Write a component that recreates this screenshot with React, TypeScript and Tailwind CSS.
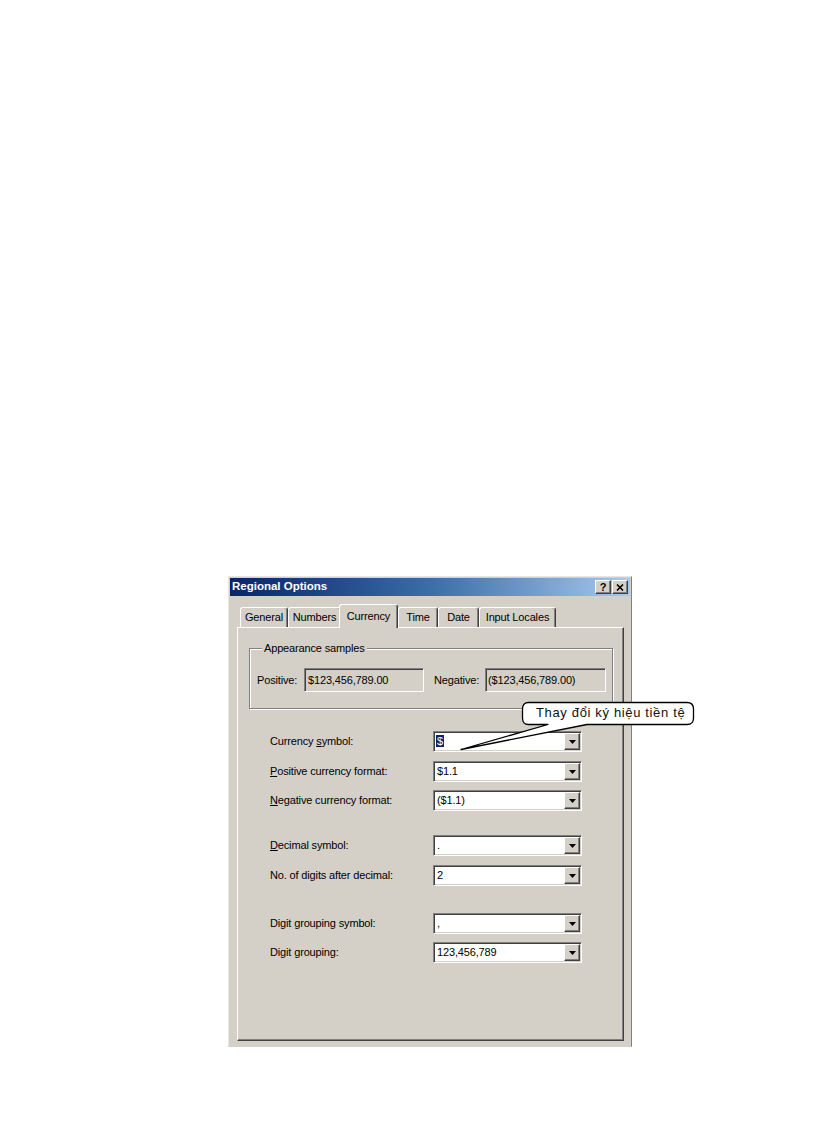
import type { ReactNode } from "react";

// classic 3D edges
const raised =
  "border border-t-white border-l-white border-r-[#404040] border-b-[#404040] shadow-[inset_-1px_-1px_0_#808080]";
const sunken =
  "border border-t-[#808080] border-l-[#808080] border-r-white border-b-white shadow-[inset_1px_1px_0_#404040,inset_-1px_-1px_0_#d4d0c8]";

const tabs = [
  { label: "General", w: "w-[48px]" },
  { label: "Numbers", w: "w-[53px]" },
  { label: "Currency", w: "w-[59px]", active: true },
  { label: "Time", w: "w-[40px]" },
  { label: "Date", w: "w-[41px]" },
  { label: "Input Locales", w: "w-[77px]" },
];

function Tab({ label, w, active }: { label: string; w: string; active?: boolean }) {
  if (active) {
    return (
      <div
        className={`${w} relative z-10 -mb-px -ml-[2px] flex h-[24px] items-start justify-center rounded-t-[3px] border-t border-l border-r border-t-white border-l-white border-r-[#404040] bg-[#d4d0c8] pt-[3px] shadow-[inset_-1px_0_0_#808080]`}
      >
        {label}
      </div>
    );
  }
  return (
    <div
      className={`${w} flex h-[20px] items-center justify-center rounded-t-[3px] border-t border-l border-r border-t-white border-l-white border-r-[#404040] shadow-[inset_-1px_0_0_#808080]`}
    >
      {label}
    </div>
  );
}

function Combo({ value, highlight }: { value: string; highlight?: boolean }) {
  return (
    <div className={`${sunken} flex h-[21px] w-[149px] items-center bg-white`}>
      <div className="flex-1 pl-[2px]">
        {highlight ? (
          <span className="bg-[#0a246a] px-px text-white">{value}</span>
        ) : (
          <span className="pl-px">{value}</span>
        )}
      </div>
      <div className={`${raised} mr-px flex h-[17px] w-[16px] items-center justify-center bg-[#d4d0c8]`}>
        <svg width="7" height="4" viewBox="0 0 7 4">
          <path d="M0 0h7L3.5 4z" fill="#000" />
        </svg>
      </div>
    </div>
  );
}

function Row({ mt, label, children }: { mt: string; label: ReactNode; children: ReactNode }) {
  return (
    <div className={`${mt} flex h-[21px] items-center`}>
      <div className="w-[163px]">{label}</div>
      {children}
    </div>
  );
}

export default function App() {
  return (
    <div className="relative min-h-[1123px] bg-white pt-[576px] pl-[228px] font-['Liberation_Sans',Arial,sans-serif] text-[11px] tracking-[-0.15px] text-black">
      <div className="flex h-[471px] w-[404px] flex-col border border-t-[#e8e6e0] border-l-[#e8e6e0] border-r-[#808080] border-b-[#d4d0c8] bg-[#d4d0c8] p-px">
        {/* title bar */}
        <div className="flex h-[18px] items-center justify-between bg-gradient-to-r from-[#0a246a] via-[#3a6ea5] to-[#a6caf0] pl-[2px] pr-[2px]">
          <span className="text-[11.5px] font-bold tracking-normal text-white">Regional Options</span>
          <div className="flex gap-[1px]">
            <div className={`${raised} flex h-[14px] w-[16px] items-center justify-center bg-[#d4d0c8] text-[11px] font-bold leading-none`}>
              ?
            </div>
            <div className={`${raised} flex h-[14px] w-[16px] items-center justify-center bg-[#d4d0c8]`}>
              <svg width="8" height="7" viewBox="0 0 8 7">
                <path d="M1 0.5l6 6M7 0.5l-6 6" stroke="#000" strokeWidth="1.6" />
              </svg>
            </div>
          </div>
        </div>

        {/* tab strip */}
        <div className="mt-[8px] ml-[7px] flex h-[23px] items-end pl-[3px]">
          {tabs.map((t) => (
            <Tab key={t.label} {...t} />
          ))}
        </div>

        {/* tab page */}
        <div className={`${raised} ml-[7px] h-[414px] w-[387px]`}>
          <fieldset className="mt-[14px] ml-[11px] w-[364px] border border-[#808080] pt-[14px] pb-[16px] pl-[7px] shadow-[inset_1px_1px_0_white,1px_1px_0_white]">
            <legend className="ml-[5px] bg-[#d4d0c8] px-[2px] leading-[12px]">Appearance samples</legend>
            <div className="flex h-[24px] items-center">
              <span className="w-[47px]">Positive:</span>
              <div className={`${sunken} flex h-[24px] w-[120px] items-center pl-[3px]`}>$123,456,789.00</div>
              <span className="ml-[10px] w-[51px]">Negative:</span>
              <div className={`${sunken} flex h-[24px] w-[121px] items-center pl-[2px]`}>($123,456,789.00)</div>
            </div>
          </fieldset>

          <div className="pl-[32px]">
            <Row
              mt="mt-[22px]"
              label={
                <>
                  Currency <span className="underline underline-offset-1">s</span>ymbol:
                </>
              }
            >
              <Combo value="$" highlight />
            </Row>
            <Row
              mt="mt-[9px]"
              label={
                <>
                  <span className="underline underline-offset-1">P</span>ositive currency format:
                </>
              }
            >
              <Combo value="$1.1" />
            </Row>
            <Row
              mt="mt-[8px]"
              label={
                <>
                  <span className="underline underline-offset-1">N</span>egative currency format:
                </>
              }
            >
              <Combo value="($1.1)" />
            </Row>
            <Row
              mt="mt-[24px]"
              label={
                <>
                  <span className="underline underline-offset-1">D</span>ecimal symbol:
                </>
              }
            >
              <Combo value="." />
            </Row>
            <Row mt="mt-[9px]" label="No. of digits after decimal:">
              <Combo value="2" />
            </Row>
            <Row mt="mt-[27px]" label="Digit grouping symbol:">
              <Combo value="," />
            </Row>
            <Row mt="mt-[8px]" label="Digit grouping:">
              <Combo value="123,456,789" />
            </Row>
          </div>
        </div>
      </div>

      {/* callout note */}
      <div className="absolute left-[455px] top-[698px] h-[57px] w-[245px]">
        <svg width="245" height="57" viewBox="0 0 245 57" className="absolute inset-0">
          <path
            d="M73.5 4.5H232Q238.5 4.5 238.5 11V20Q238.5 26.5 232 26.5H132L6 51.5L93 26.5H73.5Q67.5 26.5 67.5 20V11Q67.5 4.5 73.5 4.5Z"
            fill="#fff"
            stroke="#000"
            strokeWidth="1.3"
            strokeLinejoin="round"
          />
        </svg>
        <span className="absolute left-[81px] top-[7px] text-[13px] leading-[15px] tracking-[0.65px] text-[#111]">
          Thay đổi ký hiệu tiền tệ
        </span>
      </div>
    </div>
  );
}
